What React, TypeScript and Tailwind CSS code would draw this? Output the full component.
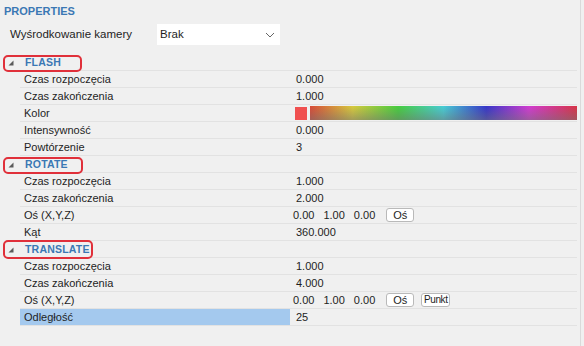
import React from "react";

type Row = {
  label: string;
  value?: string;
  kind?: "color" | "axis" | "axisPoint";
  selected?: boolean;
};

type Group = {
  title: string;
  boxW: string;
  boxTop: string;
  boxH: string;
  rows: Row[];
};

const GROUPS: Group[] = [
  {
    title: "FLASH",
    boxW: "w-[79px]",
    boxTop: "top-[1px]",
    boxH: "h-[17px]",
    rows: [
      { label: "Czas rozpoczęcia", value: "0.000" },
      { label: "Czas zakończenia", value: "1.000" },
      { label: "Kolor", kind: "color" },
      { label: "Intensywność", value: "0.000" },
      { label: "Powtórzenie", value: "3" },
    ],
  },
  {
    title: "ROTATE",
    boxW: "w-[80px]",
    boxTop: "top-[1px]",
    boxH: "h-[17px]",
    rows: [
      { label: "Czas rozpoczęcia", value: "1.000" },
      { label: "Czas zakończenia", value: "2.000" },
      { label: "Oś (X,Y,Z)", kind: "axis" },
      { label: "Kąt", value: "360.000" },
    ],
  },
  {
    title: "TRANSLATE",
    boxW: "w-[90px]",
    boxTop: "top-[-1px]",
    boxH: "h-[19px]",
    rows: [
      { label: "Czas rozpoczęcia", value: "1.000" },
      { label: "Czas zakończenia", value: "4.000" },
      { label: "Oś (X,Y,Z)", kind: "axisPoint" },
      { label: "Odległość", value: "25", selected: true },
    ],
  },
];

function SmallButton({ children, className = "" }: { children: React.ReactNode; className?: string }) {
  return (
    <span
      className={`flex h-[14px] items-center rounded-[3px] border border-[#b9b9b9] bg-white leading-none ${className}`}
    >
      {children}
    </span>
  );
}

function Value({ row }: { row: Row }) {
  if (row.kind === "color") {
    return (
      <div className="flex h-full items-center gap-[3px] pl-[5px]">
        <span className="h-[13px] w-[12px] bg-[#f05050]" />
        <span className="h-[14px] flex-1 bg-[linear-gradient(to_bottom,rgba(255,255,255,0.05),rgba(120,120,120,0.55)),linear-gradient(to_right,#d8402c,#d6c832_16%,#3ccc34_33%,#3ccbd4_50%,#2a2ac8_66%,#d030d0_82%,#d8283c)]" />
      </div>
    );
  }
  if (row.kind === "axis" || row.kind === "axisPoint") {
    return (
      <div className="flex h-full items-center pl-[3px]">
        <span>0.00</span>
        <span className="ml-[9px]">1.00</span>
        <span className="ml-[9px]">0.00</span>
        <SmallButton className="ml-[11px] w-[28px] justify-center text-[11px]">Oś</SmallButton>
        {row.kind === "axisPoint" && (
          <SmallButton className="ml-[7px] w-[29px] justify-center text-[10px] tracking-[-0.4px]">
            Punkt
          </SmallButton>
        )}
      </div>
    );
  }
  return <div className="flex h-full items-center pl-[6px]">{row.value}</div>;
}

function Triangle() {
  return (
    <svg width="6" height="6" viewBox="0 0 6 6" className="shrink-0">
      <polygon points="5.5,0.5 5.5,5.5 0.5,5.5" fill="#5a5a5a" />
    </svg>
  );
}

function GroupBlock({ group }: { group: Group }) {
  return (
    <div>
      <div className="relative flex h-[17px] items-center">
        <div className="ml-[8px] flex items-center">
          <Triangle />
        </div>
        <span className="ml-[11px] text-[10.5px] font-bold tracking-[0.2px] text-[#3b78b4]">{group.title}</span>
        <div className="absolute bottom-0 left-[20px] right-0 h-px bg-[#e2e2e2]" />
        <div
          className={`absolute left-[3px] ${group.boxTop} ${group.boxW} ${group.boxH} rounded-[5px] border-2 border-[#e0303a]`}
        />
      </div>
      {group.rows.map((row, i) => (
        <div key={i} className="ml-[20px] flex h-[17px] border-b border-[#e2e2e2]">
          <div
            className={`flex w-[270px] items-center pl-[4px] ${row.selected ? "bg-[#a4c9ee]" : ""}`}
          >
            {row.label}
          </div>
          <div className="flex-1">
            <Value row={row} />
          </div>
        </div>
      ))}
    </div>
  );
}

export default function App() {
  return (
    <div className="h-[346px] w-[584px] overflow-hidden bg-[#f0f0f0] font-['Liberation_Sans',Arial,sans-serif] text-[11px] text-[#1e1e1e]">
      <div className="h-full w-[581px] border-r border-[#dadada]">
        {/* Title */}
        <div className="flex h-[24px] items-start pl-[4px] pt-[3px]">
          <span className="text-[11px] font-bold text-[#3b78b4]">PROPERTIES</span>
        </div>

        {/* Camera centering */}
        <div className="flex h-[21px] items-center">
          <span className="ml-[10px] w-[147px] text-[11.5px]">Wyśrodkowanie kamery</span>
          <div className="flex h-[21px] w-[123px] items-center justify-between bg-white pl-[3px] pr-[5px] text-[11.5px]">
            <span>Brak</span>
            <svg width="10" height="6" viewBox="0 0 10 6">
              <polyline points="1,1 5,5 9,1" fill="none" stroke="#666" strokeWidth="1" />
            </svg>
          </div>
        </div>

        {/* Property grid */}
        <div className="mt-[9px] pr-[3px]">
          {GROUPS.map((g) => (
            <GroupBlock key={g.title} group={g} />
          ))}
        </div>
      </div>
    </div>
  );
}
